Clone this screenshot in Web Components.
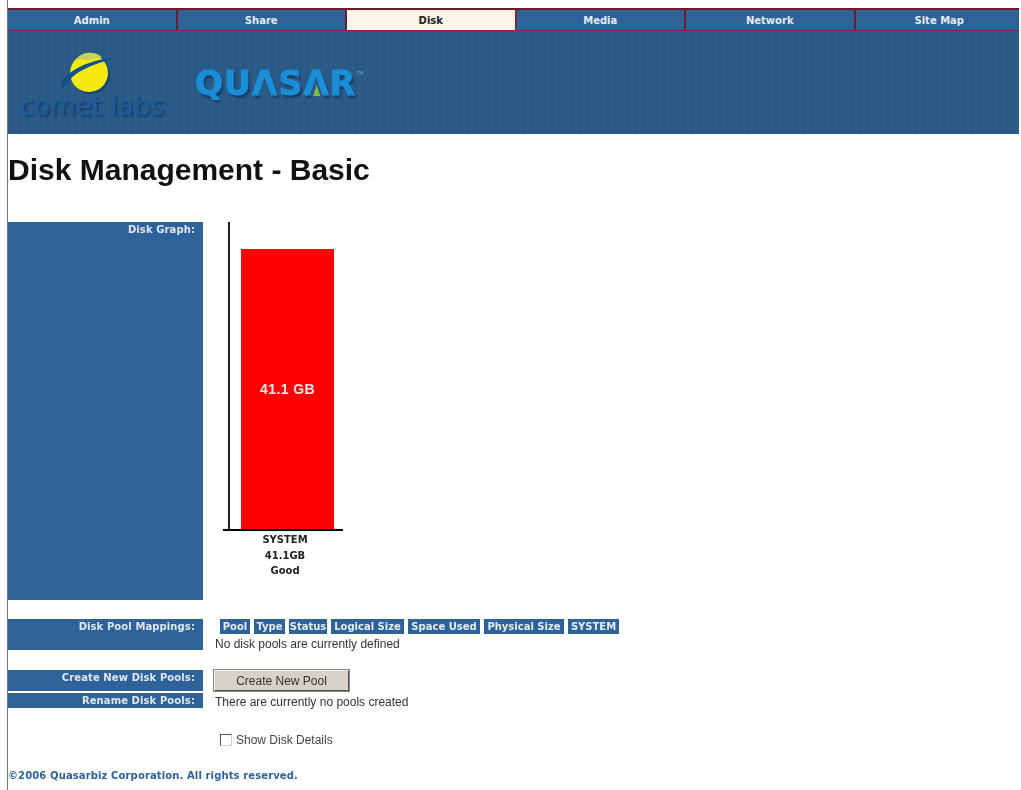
<!DOCTYPE html>
<html>
<head>
<meta charset="utf-8">
<title>Disk Management - Basic</title>
<style>
html,body{margin:0;height:790px;overflow:hidden;background:#fff}
body{padding:0;font-family:"Liberation Sans",Arial,sans-serif}
</style>
</head>
<body>
<q-app>
  <q-nav active="Disk"></q-nav>
  <q-banner></q-banner>
  <q-title>Disk Management - Basic</q-title>

  <q-row label="Disk Graph:" style="--h:378px;--top:35px">
    <q-chart name="SYSTEM" size="41.1GB" status="Good" value="41.1 GB"></q-chart>
  </q-row>

  <q-row label="Disk Pool Mappings:" style="--h:31px;--top:19px">
    <q-chips items="Pool:30,Type:31,Status:38,Logical Size:73,Space Used:72,Physical Size:80,SYSTEM:51"></q-chips>
    <q-note style="margin-top:2px">No disk pools are currently defined</q-note>
  </q-row>

  <q-row label="Create New Disk Pools:" style="--h:21px;--top:20px">
    <q-button>Create New Pool</q-button>
  </q-row>

  <q-row label="Rename Disk Pools:" style="--h:15px;--top:2px">
    <q-note style="margin-top:1px">There are currently no pools created</q-note>
  </q-row>

  <q-check>Show Disk Details</q-check>
  <q-foot>©2006 Quasarbiz Corporation. All rights reserved.</q-foot>
</q-app>

<script>
// small helper, every element just sets its shadow html once
class Base extends HTMLElement {
  constructor(){ super(); this.attachShadow({mode:'open'}); }
  connectedCallback(){ this.shadowRoot.innerHTML=this.html(); }
}

class QApp extends Base {
  html(){ return `<style>
    :host{display:block;box-sizing:border-box;height:790px;margin-left:7px;padding-top:8px;
      border-left:1px solid #777;filter:blur(.55px);color:#111}
  </style><slot></slot>`; }
}
customElements.define('q-app',QApp);

class QNav extends Base {
  html(){
    const a=this.getAttribute('active');
    const items=['Admin','Share','Disk','Media','Network','Site Map'];
    return `<style>
      :host{display:grid;grid-template-columns:repeat(6,169.5px);width:1011px;height:23px;box-sizing:border-box;overflow:hidden;
        border-top:2px solid #6d1a2c;border-bottom:1px solid #8a2036;background:#2f6298;
        font:bold 10px "DejaVu Sans",sans-serif;color:#e4ebf2}
      div{display:flex;align-items:center;justify-content:center;border-right:2px solid #6d1a2c}
      .on{background:#fff3ea;color:#222;border-right-color:#8a2036}
    </style>${items.map(t=>`<div class="${t===a?'on':''}">${t}</div>`).join('')}`;
  }
}
customElements.define('q-nav',QNav);

class QBanner extends Base {
  html(){ return `<style>
    :host{display:flex;align-items:flex-start;width:1011px;height:103px;background-color:#2a5a87;
      background-image:repeating-linear-gradient(90deg,rgba(255,255,255,.01) 0 3px,rgba(0,0,0,.012) 3px 7px)}
    .comet{display:flex;flex-direction:column;align-items:center;width:158px;margin:19px 0 0 5px}
    svg{display:block;width:66px;height:46px;margin-right:8px}
    .labs{font:26px/26px "DejaVu Sans",sans-serif;letter-spacing:.1px;color:#1b5c9e;margin-top:-3px;
      white-space:nowrap;text-shadow:2px 2px 2px #1b3f63;filter:blur(.7px)}
    .quasar{margin:23px 0 0 24px;font:bold 33px/38px "DejaVu Sans",sans-serif;letter-spacing:1px;
      color:#1a8fd8;-webkit-text-stroke:.9px #1a8fd8;text-shadow:2px 3px 2px #1b3f63;white-space:nowrap}
    .a{position:relative;display:inline-block}
    .a::before{content:"";position:absolute;left:6px;right:7px;top:13px;height:18px;background:#2a5a87;clip-path:polygon(50% 0,100% 100%,0 100%)}
    .a.g::after{content:"";position:absolute;left:10px;width:7px;top:20px;height:11px;background:#7fc03a;clip-path:polygon(50% 0,100% 100%,0 100%)}
    sup{font-size:5px;font-weight:normal;vertical-align:20px;color:#7fa3c4;-webkit-text-stroke:0;text-shadow:none;letter-spacing:0}
  </style>
  <div class="comet">
    <svg viewBox="0 0 66 46">
      <circle cx="36" cy="25" r="19" fill="#133f6b" opacity=".8"/>
      <circle cx="34" cy="23" r="19" fill="#f4ea12"/>
      <path d="M21 9a19 19 0 0 1 26-2l-14 3z" fill="#c8d25a"/>
      <path d="M6 36C8 24 28 10 64 7 42 13 22 20 15 30 11 36 7 39 6 36z" fill="#14508f"/>
    </svg>
    <div class="labs">comet labs</div>
  </div>
  <div class="quasar">QU<span class="a">A</span>S<span class="a g">A</span>R<sup>TM</sup></div>`; }
}
customElements.define('q-banner',QBanner);

class QTitle extends Base {
  html(){ return `<style>
    :host{display:block;margin-top:19px;font:bold 30px/34px "Liberation Sans",sans-serif;color:#111;white-space:nowrap}
  </style><slot></slot>`; }
}
customElements.define('q-title',QTitle);

class QRow extends Base {
  html(){ return `<style>
    :host{display:grid;grid-template-columns:195px 1fr;grid-template-rows:var(--h);column-gap:10px;height:var(--h);margin-top:var(--top);width:1011px}
    .lab{background:#2f6298;color:#dfe7ef;text-align:right;font:bold 10px/15px "DejaVu Sans",sans-serif;letter-spacing:.1px;
      padding:0 8px 0 0;box-sizing:border-box;white-space:nowrap}
    .body{min-width:0}
  </style><div class="lab">${this.getAttribute('label')}</div><div class="body"><slot></slot></div>`; }
}
customElements.define('q-row',QRow);

class QChart extends Base {
  html(){
    const g=n=>this.getAttribute(n);
    return `<style>
      :host{display:block;width:120px;margin-left:10px}
      .plot{display:flex;height:309px;box-sizing:border-box;border-bottom:2px solid #000}
      .axis{width:2px;background:#222;margin-left:5px}
      .bar{width:93px;height:280px;margin:27px 0 0 11px;background:#f00;color:#ffe9e9;display:flex;align-items:center;justify-content:center;
        font:bold 14px "Liberation Sans",sans-serif;letter-spacing:.4px}
      .cap{margin:1px 0 0 4px;text-align:center;font:bold 10px/15.5px "DejaVu Sans",sans-serif;color:#222}
    </style>
    <div class="plot"><div class="axis"></div><div class="bar"><span>${g('value')}</span></div></div>
    <div class="cap">${g('name')}<br>${g('size')}<br>${g('status')}</div>`;
  }
}
customElements.define('q-chart',QChart);

class QChips extends Base {
  html(){
    const items=this.getAttribute('items').split(',').map(s=>s.split(':'));
    return `<style>
      :host{display:flex;gap:4px;margin-left:7px;height:15px;white-space:nowrap}
      span{background:#2f6298;color:#e4ebf2;font:bold 10px/15px "DejaVu Sans",sans-serif;text-align:center}
    </style>${items.map(([t,w])=>`<span style="width:${w}px">${t}</span>`).join('')}`;
  }
}
customElements.define('q-chips',QChips);

class QNote extends Base {
  html(){ return `<style>
    :host{display:block;margin-left:2px;font:12px/16px "Liberation Sans",sans-serif;color:#333;white-space:nowrap}
  </style><slot></slot>`; }
}
customElements.define('q-note',QNote);

class QButton extends Base {
  html(){ return `<style>
    :host{display:block;margin-top:-1px;margin-left:0}
    button{display:block;width:137px;height:23px;padding:0;background:#d6d2ca;color:#333;
      border:2px solid;border-color:#f3f1ec #55524c #55524c #f3f1ec;outline:1px solid #888;outline-offset:-1px;
      font:12px "Liberation Sans",sans-serif}
  </style><button><slot></slot></button>`; }
}
customElements.define('q-button',QButton);

class QCheck extends Base {
  html(){ return `<style>
    :host{display:flex;align-items:center;gap:4px;margin:24px 0 0 212px;height:16px;
      font:12px/16px "Liberation Sans",sans-serif;color:#444;white-space:nowrap}
    i{display:block;width:10px;height:10px;border:1px solid;border-color:#555 #ccc #ccc #555;background:#fff}
  </style><i></i><slot></slot>`; }
}
customElements.define('q-check',QCheck);

class QFoot extends Base {
  html(){ return `<style>
    :host{display:block;margin-top:21px;font:bold 10px/14px "DejaVu Sans",sans-serif;letter-spacing:.12px;color:#2f6298;white-space:nowrap}
  </style><slot></slot>`; }
}
customElements.define('q-foot',QFoot);
</script>
</body>
</html>
